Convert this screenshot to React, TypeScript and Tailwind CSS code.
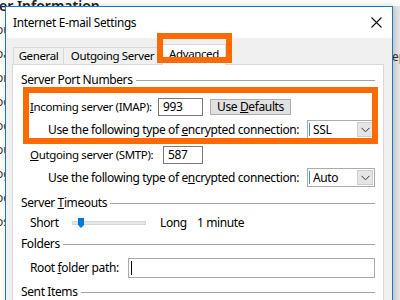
import React from "react";

const FONT = { fontFamily: '"Noto Sans", "Open Sans", sans-serif' };

function Chevron() {
  return (
    <svg width="9" height="6" viewBox="0 0 9 6" className="block">
      <path d="M0.5 0.8 L4.5 4.8 L8.5 0.8" fill="none" stroke="#333" strokeWidth="1" />
    </svg>
  );
}

function Select({ value }: { value: string }) {
  return (
    <div className="ml-auto shrink-0 w-[68px] h-[19px] border border-[#acacac] bg-white flex items-stretch">
      <div className="w-px my-[2px] ml-px bg-[#3d8ee0]" />
      <div className="flex-1 flex items-center pl-[3px] leading-none">{value}</div>
      <div className="w-[16px] m-px bg-[#e5e5e5] border border-[#cfcfcf] flex items-center justify-center">
        <Chevron />
      </div>
    </div>
  );
}

function GroupLabel({ children }: { children: React.ReactNode }) {
  return (
    <div className="h-[16px] flex items-center gap-[3px]">
      <span className="leading-none whitespace-nowrap">{children}</span>
      <div className="flex-1 h-px bg-[#a5a5a5]" />
    </div>
  );
}

export default function App() {
  return (
    <div
      className="relative w-[400px] h-[300px] overflow-hidden bg-[#ececec] text-black text-[12px] tracking-[-0.38px] whitespace-nowrap"
      style={FONT}
    >
      {/* background window behind the dialog */}
      <div className="absolute inset-0 bg-white">
        <div className="absolute left-[-1px] top-[-5px] text-[14px] font-semibold tracking-normal text-[#222]">
          er Information
        </div>
        <div className="absolute left-[392px] top-[6px] w-[8px] h-[294px] bg-[#e6e6e6]" />
        <div className="absolute left-[392px] top-[48px] text-[12px] text-[#333] tracking-normal">ep</div>
        <div className="absolute left-[-4px] top-[18px] flex flex-col text-[12px] leading-[24px] text-[#333] tracking-normal">
          <span>ou</span>
          <span>oa</span>
          <span>on</span>
          <span>oc</span>
          <span>oc</span>
          <span>our</span>
          <span>og</span>
          <span>oe</span>
          <span>os</span>
        </div>
      </div>

      {/* dialog */}
      <div className="absolute left-[5px] top-[6px] w-[388px] h-[320px] border border-[#1b78cc] bg-[#f0f0f0] shadow-[2px_0_6px_rgba(0,0,0,0.18)] flex flex-col">
        {/* title bar */}
        <div className="h-[31px] bg-white flex items-center justify-between pl-[7px] pr-[10px]">
          <span className="text-[11.8px] tracking-[-0.3px] leading-none">Internet E-mail Settings</span>
          <svg width="11" height="11" viewBox="0 0 11 11" className="block">
            <path d="M0.5 0.5 L10.5 10.5 M10.5 0.5 L0.5 10.5" stroke="#111" strokeWidth="1.1" />
          </svg>
        </div>

        {/* tabs */}
        <div className="pl-[6px] pr-[8px] flex-1 flex flex-col">
          <div className="h-[26px] flex items-end pl-px">
            <div className="w-[51px] h-[17px] border border-b-0 border-[#d9d9d9] flex items-center justify-center leading-none text-[11.5px]">
              General
            </div>
            <div className="w-[98px] h-[17px] border border-b-0 border-l-0 border-[#d9d9d9] flex items-center justify-center leading-none text-[11.5px]">
              Outgoing Server
            </div>
            <div className="relative z-10 w-[64px] h-[21px] -mb-px bg-white border border-b-0 border-[#d9d9d9] flex items-center justify-center leading-none pb-[3px] text-[11.5px]">
              Advanced
            </div>
          </div>

          {/* panel */}
          <div className="flex-1 bg-white border border-[#d9d9d9] px-[8px] pt-[7px] flex flex-col">
            <GroupLabel>Server Port Numbers</GroupLabel>

            <div className="mt-[9px] h-[19px] flex items-center pl-[9px]">
              <span className="w-[128px] shrink-0 leading-none text-[11.5px] tracking-[-0.35px]">
                <u>I</u>ncoming server (IMAP):
              </span>
              <div className="w-[45px] shrink-0 h-[18px] border border-[#7a7a7a] flex items-center pl-[4px] leading-none">993</div>
              <div className="ml-[7px] shrink-0 w-[81px] h-[16px] bg-[#e1e1e1] border border-[#adadad] flex items-center justify-center leading-none">
                Use&nbsp;<u>D</u>efaults
              </div>
            </div>

            <div className="mt-[4px] h-[19px] flex items-center pl-[27px]">
              <span className="leading-none">
                Use the following type of <u>e</u>ncrypted connection:
              </span>
              <Select value="SSL" />
            </div>

            <div className="mt-[6px] h-[19px] flex items-center pl-[9px]">
              <span className="w-[133px] shrink-0 leading-none text-[11.5px] tracking-[-0.35px]">
                <u>O</u>utgoing server (SMTP):
              </span>
              <div className="w-[40px] shrink-0 h-[18px] border border-[#7a7a7a] flex items-center pl-[4px] leading-none">587</div>
            </div>

            <div className="mt-[4px] h-[19px] flex items-center pl-[27px]">
              <span className="leading-none">
                Use the following type of e<u>n</u>crypted connection:
              </span>
              <Select value="Auto" />
            </div>

            <div className="mt-[8px]">
              <GroupLabel>
                Server <u>T</u>imeouts
              </GroupLabel>
            </div>

            <div className="mt-[4px] h-[16px] flex items-center pl-[9px]">
              <span className="w-[42px] shrink-0 leading-none">Short</span>
              <div className="relative shrink-0 w-[74px] h-[4px] bg-[#e7e7e7] border border-[#d6d6d6]">
                <svg width="6" height="10" viewBox="0 0 6 10" className="absolute left-[5px] top-[-4px] block">
                  <polygon points="0,0 6,0 6,7 3,10 0,7" fill="#0078d7" />
                </svg>
              </div>
              <span className="ml-[14px] shrink-0 w-[37px] leading-none">Long</span>
              <span className="leading-none">1 minute</span>
            </div>

            <div className="mt-[5px]">
              <GroupLabel>Folders</GroupLabel>
            </div>

            <div className="mt-[6px] h-[20px] flex items-center pl-[9px]">
              <span className="w-[98px] shrink-0 leading-none">
                Root <u>f</u>older path:
              </span>
              <div className="flex-1 h-[20px] border border-[#a8a8a8] flex items-center pl-[2px]">
                <div className="w-px h-[14px] bg-black" />
              </div>
            </div>

            <div className="mt-[6px]">
              <GroupLabel>Sent Items</GroupLabel>
            </div>
          </div>
        </div>
      </div>

      {/* orange annotation boxes */}
      <div className="absolute left-[157px] top-[33px] w-[75px] h-[30px] border-[6px] border-[#fd6a02] z-20" />
      <div className="absolute left-[23px] top-[87px] w-[355px] h-[57px] border-[6px] border-[#fd6a02] z-20" />
    </div>
  );
}
